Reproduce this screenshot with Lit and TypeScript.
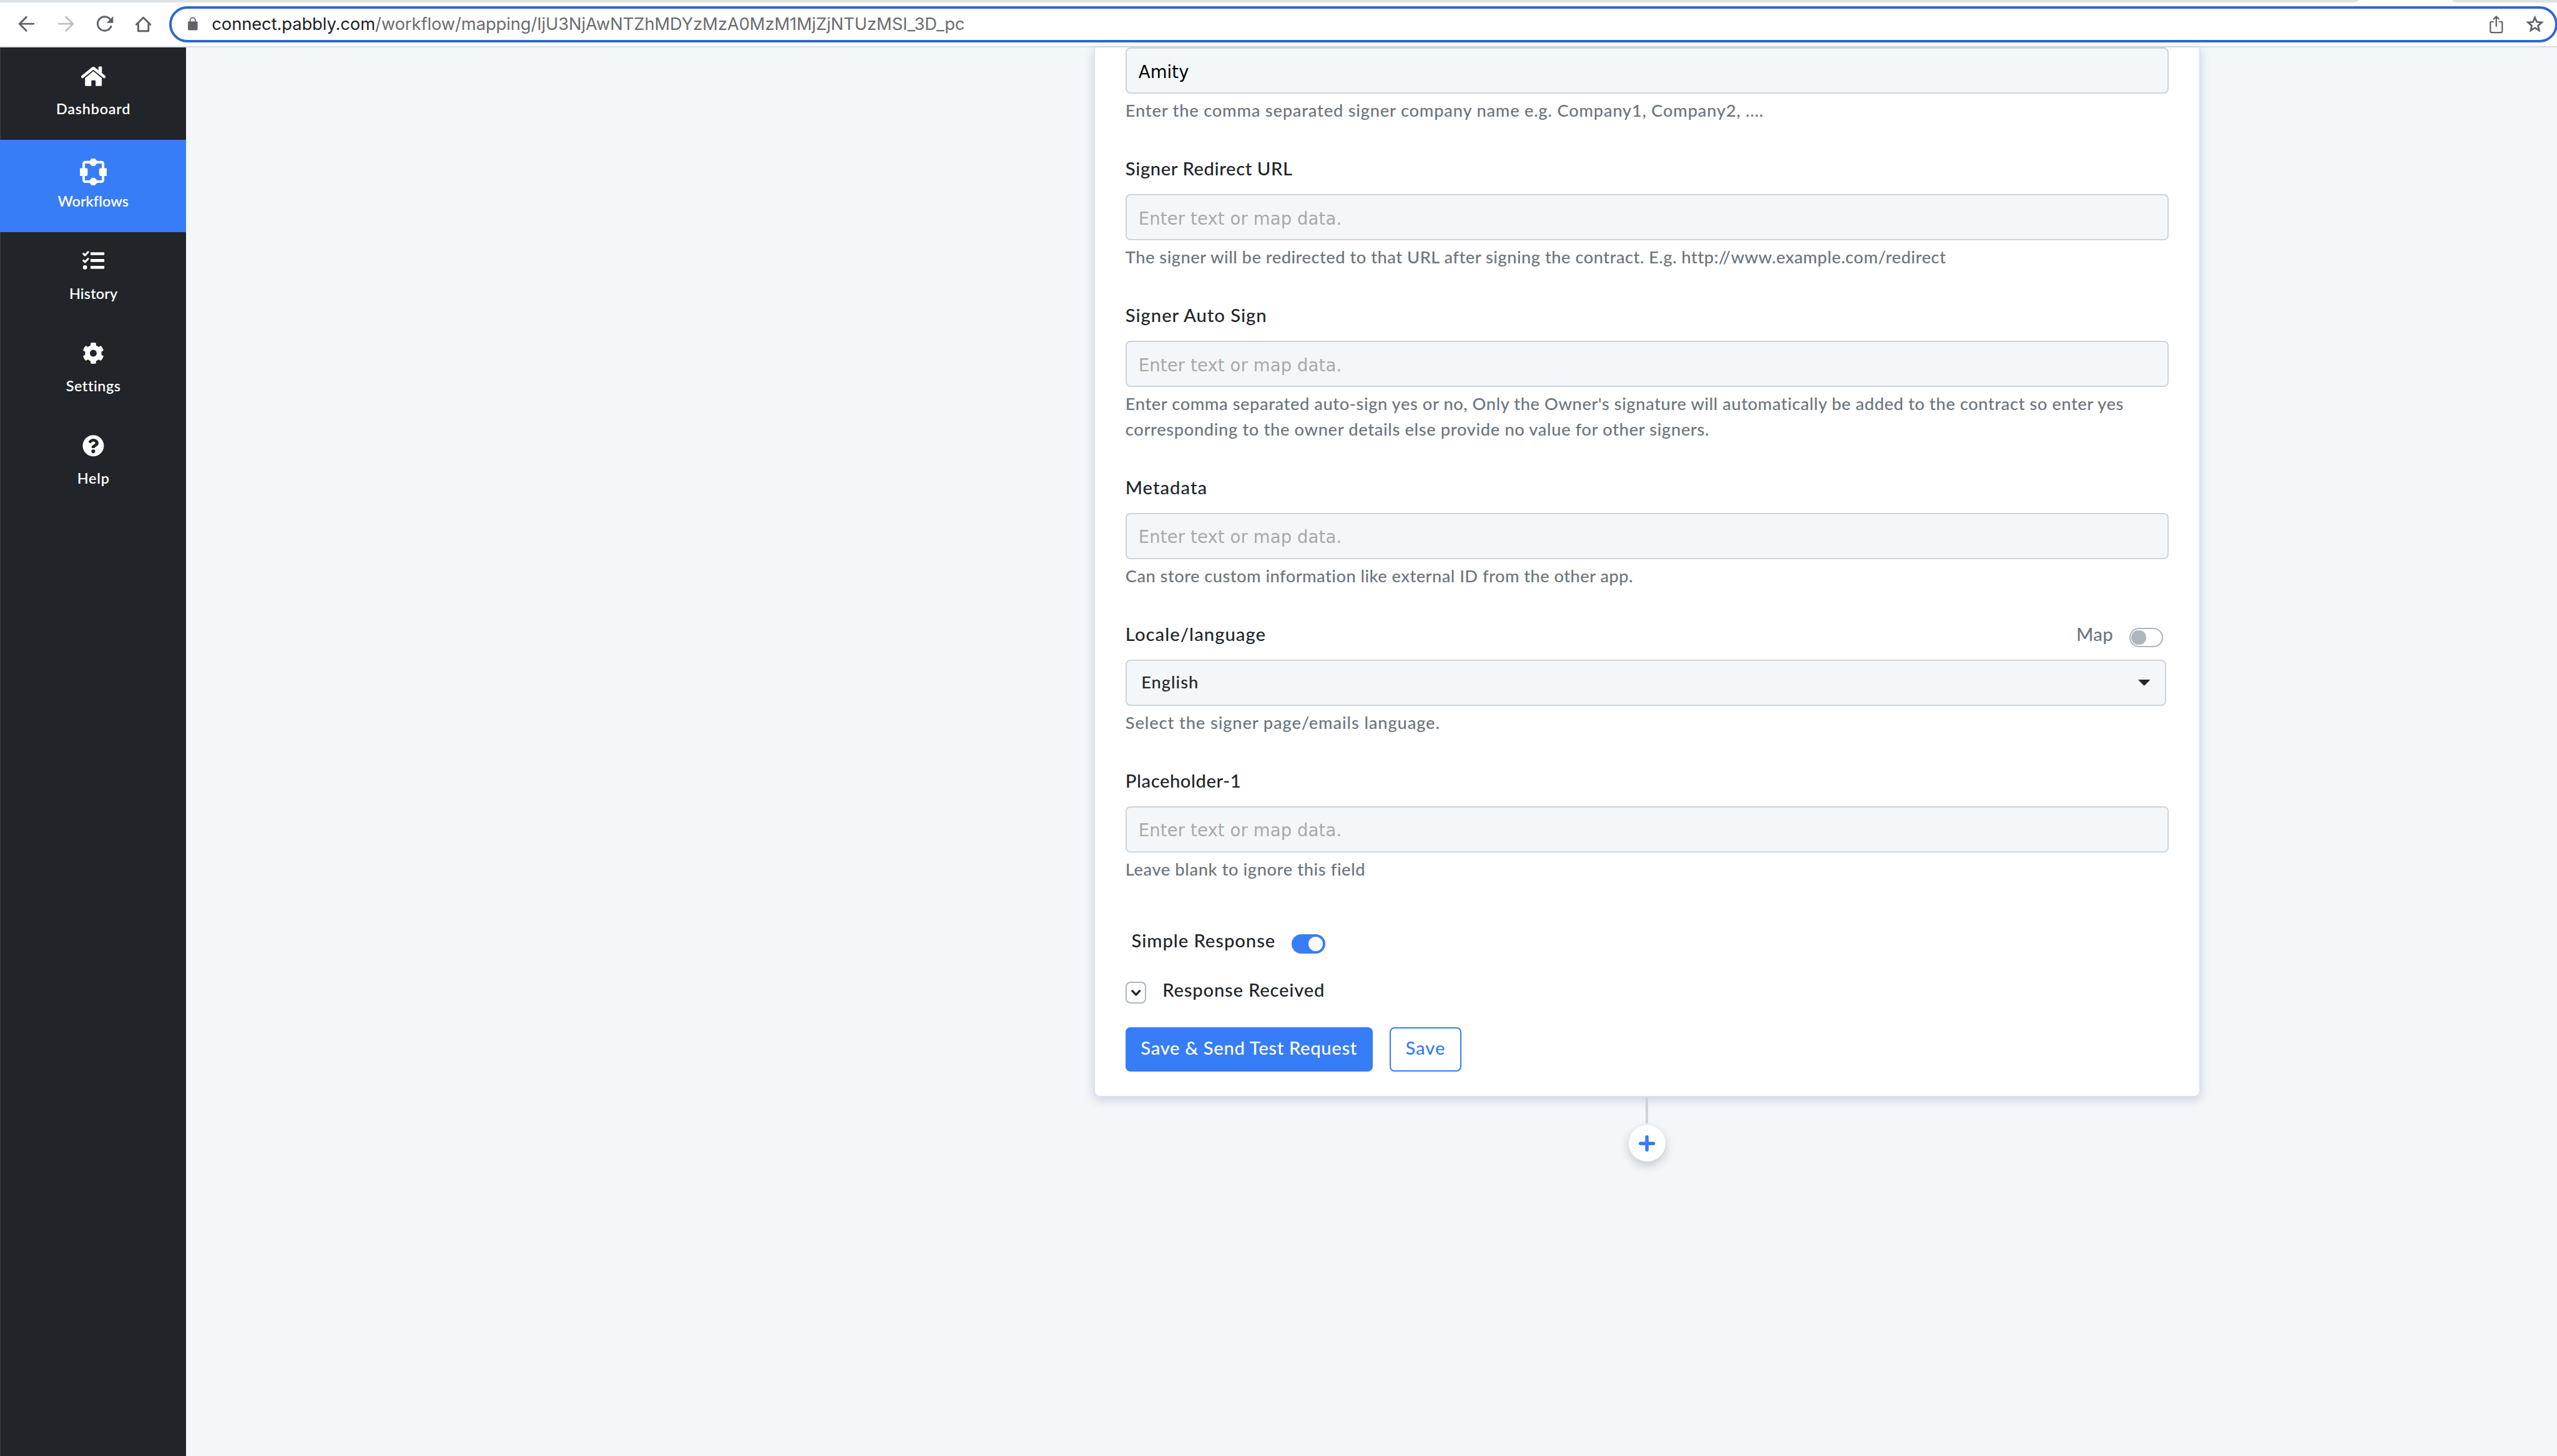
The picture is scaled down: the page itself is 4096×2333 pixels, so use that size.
import { LitElement, html, css, svg, nothing, type TemplateResult } from "lit";
import { customElement } from "lit/decorators.js";
import { classMap } from "lit/directives/class-map.js";
import { styleMap } from "lit/directives/style-map.js";

/** A run of text with its own letter spacing in px. */
interface Tracked { text: string; track: number; }

interface NavItem { label: Tracked; viewBox: string; icon: unknown; active?: boolean; }

interface Field {
  label?: Tracked;
  value?: string;
  select?: Tracked;
  help: Tracked[];
}

const t = (text: string, track = 0): Tracked => ({ text, track });
const run = (s: Tracked): TemplateResult =>
  html`<span style=${styleMap({ letterSpacing: `${s.track}px` })}>${s.text}</span>`;

const NAV: NavItem[] = [
  {
    label: t("Dashboard", 0.78),
    viewBox: "131 109 44 44",
    icon: svg`
      <path d="M135.3 126.4L151.7 113Q153 112 154.3 113L171 126.4" fill="none" stroke="#fff" stroke-width="4.6" stroke-linecap="round"/>
      <path d="M161.5 110.6Q161.5 109.4 162.7 109.4H166Q167.2 109.4 167.2 110.6V123L161.5 118.4Z"/>
      <path d="M153 117.3L167 128.8V140.4Q167 141.6 165.8 141.6H156.8V133.6Q156.8 132.4 155.6 132.4H151Q149.8 132.4 149.8 133.6V141.6H140.6Q139.4 141.6 139.4 140.4V128.8Z"/>`,
  },
  {
    label: t("Workflows", 0.05),
    viewBox: "131 261 44 44",
    active: true,
    icon: svg`
      <rect x="137.2" y="267" width="31.8" height="32" rx="2.5" fill="none" stroke="#fff" stroke-width="4.2"/>
      <path d="M131 276.8H142.5L143.7 278.5V287.5L142.5 289.6H131ZM175 276.8H163.8L162.6 278.5V287.5L163.8 289.6H175Z"/>
      <path d="M150.5 261H155.5L159.5 265V269L155 273.6H151L146.5 269V265ZM150.5 305H155.5L159.5 301V297L155 292.6H151L146.5 297V301Z"/>`,
  },
  {
    label: t("History", 0.15),
    viewBox: "131 412.7 44 44",
    icon: svg`
      <g fill="none" stroke="#fff" stroke-width="3.2" stroke-linecap="round" stroke-linejoin="round">
        <path d="M136.8 417.4L139.4 419.9L144.4 414.6M136.8 428.6L139.4 431.1L144.4 425.8"/>
      </g>
      <circle cx="139.4" cy="439.8" r="3.4"/>
      <rect x="148.4" y="414.9" width="22.8" height="4.8" rx="1"/>
      <rect x="148.4" y="426.1" width="22.8" height="4.8" rx="1"/>
      <rect x="148.4" y="437.4" width="22.8" height="4.8" rx="1"/>`,
  },
  {
    label: t("Settings", 0.55),
    viewBox: "131 564.1 44 44",
    icon: svg`<path transform="translate(135 562.5) scale(.0703)" d="M487.4 315.7l-42.6-24.6c4.3-23.2 4.3-47 0-70.2l42.6-24.6c4.9-2.8 7.1-8.6 5.5-14-11.1-35.6-30-67.8-54.7-94.6-3.8-4.1-10-5.1-14.8-2.3L380.8 110c-17.9-15.4-38.5-27.3-60.8-35.1V25.8c0-5.6-3.9-10.5-9.4-11.7-36.7-8.2-74.3-7.8-109.2 0-5.5 1.2-9.4 6.1-9.4 11.7V75c-22.2 7.9-42.8 19.8-60.8 35.1L88.7 85.5c-4.9-2.8-11-1.9-14.8 2.3-24.7 26.7-43.6 58.9-54.7 94.6-1.7 5.4.6 11.2 5.5 14L67.3 221c-4.3 23.2-4.3 47 0 70.2l-42.6 24.6c-4.9 2.8-7.1 8.6-5.5 14 11.1 35.6 30 67.8 54.7 94.6 3.8 4.1 10 5.1 14.8 2.3l42.6-24.6c17.9 15.4 38.5 27.3 60.8 35.1v49.2c0 5.6 3.9 10.5 9.4 11.7 36.7 8.2 74.3 7.8 109.2 0 5.5-1.2 9.4-6.1 9.4-11.7v-49.2c22.2-7.9 42.8-19.8 60.8-35.1l42.6 24.6c4.9 2.8 11 1.9 14.8-2.3 24.7-26.7 43.6-58.9 54.7-94.6 1.5-5.5-.7-11.3-5.6-14.1zM256 336c-44.1 0-80-35.9-80-80s35.9-80 80-80 80 35.9 80 80-35.9 80-80 80z"/>`,
  },
  {
    label: t("Help", 0.75),
    viewBox: "131 715.8 44 44",
    icon: svg`<path transform="translate(135 714.5) scale(.0703)" d="M504 256c0 136.997-111.043 248-248 248S8 392.997 8 256C8 119.083 119.043 8 256 8s248 111.083 248 248zM262.655 90c-54.497 0-89.255 22.957-116.549 63.758-3.536 5.286-2.353 12.415 2.715 16.258l34.699 26.31c5.205 3.947 12.621 3.008 16.665-2.122 17.864-22.658 30.113-35.797 57.303-35.797 20.429 0 45.698 13.148 45.698 32.958 0 14.976-12.363 22.667-32.534 33.976C247.128 238.528 216 254.941 216 296v4c0 6.627 5.373 12 12 12h56c6.627 0 12-5.373 12-12v-1.333c0-28.462 83.186-29.647 83.186-106.667 0-58.002-60.165-102-116.531-102zM256 338c-25.365 0-46 20.635-46 46 0 25.364 20.635 46 46 46s46-20.636 46-46c0-25.365-20.635-46-46-46z"/>`,
  },
];

const FIELDS: Field[] = [
  {
    value: "Amity",
    help: [t("Enter the comma separated signer company name e.g. Company1, Company2, ....", 0.8)],
  },
  {
    label: t("Signer Redirect URL", 0.6),
    help: [t("The signer will be redirected to that URL after signing the contract. E.g. http://www.example.com/redirect", 0.5)],
  },
  {
    label: t("Signer Auto Sign", 0.97),
    help: [
      t("Enter comma separated auto-sign yes or no, Only the Owner's signature will automatically be added to the contract so enter yes", 0.58),
      t("corresponding to the owner details else provide no value for other signers.", 0.65),
    ],
  },
  {
    label: t("Metadata", 1),
    help: [t("Can store custom information like external ID from the other app.", 0.46)],
  },
  {
    label: t("Locale/language", 1.05),
    select: t("English", 1),
    help: [t("Select the signer page/emails language.", 0.89)],
  },
  {
    label: t("Placeholder-1", 0.55),
    help: [t("Leave blank to ignore this field", 0.6)],
  },
];

@customElement("app-root")
export class AppRoot extends LitElement {
  static styles = css`
    :host { display: block; width: 4096px; height: 2333px; overflow: hidden; }
    * { box-sizing: border-box; }
    .stage {
      zoom: 0.975; width: 4202px; height: 2394px; overflow: hidden;
      display: flex; flex-direction: column; background: #f3f7fa;
      font-family: Lato, "Liberation Sans", sans-serif; font-weight: 500; color: #212529;
    }
    svg { display: block; overflow: visible; flex: none; }
    span { white-space: pre; }

    .browser { flex: none; height: 78px; background: #fff; border-bottom: 2.1px solid #dadcdf; }
    .tabs { display: flex; height: 4px; gap: 154px; }
    .tabs i { background: #dee1e6; height: 4px; }
    .tab-left { width: 3875px; border-bottom-right-radius: 9px 4px; }
    .tab-right { flex: 1; border-bottom-left-radius: 9px 4px; }
    .bar { display: flex; height: 72px; padding: 6px 0 0 12px; }
    .tool { width: 64px; height: 60px; display: flex; align-items: center; justify-content: center; }
    .omnibox {
      flex: none; width: 3924px; height: 60px; margin-left: 10px; padding: 0 18px 0 27px;
      border: 4.15px solid #2f68cd; border-radius: 30px; display: flex; align-items: center;
      font: 400 28px/52px Inter, "Liberation Sans", sans-serif; letter-spacing: -0.07px; color: #6a6c6e;
    }
    .host { color: #202124; }
    .url { margin-left: 23px; padding-top: 1px; flex: 1; }
    .share { margin-right: 38px; }

    .body { flex: 1; display: flex; min-height: 0; }
    .nav { flex: none; width: 306px; background: #212529; border-left: 1.1px solid #3b3f43; }
    .item {
      height: 151.7px; padding-top: 31px; display: flex; flex-direction: column; align-items: center; gap: 8.5px;
      color: #fff; font-size: 24px; font-weight: 600; line-height: 36px;
    }
    .item.active { background: #377df7; margin-left: -1px; }

    .main { flex: 1; padding-left: 1491px; }
    .flow { width: 1818px; display: flex; flex-direction: column; align-items: center; }
    .card {
      width: 1818px; height: 1725px; padding: 0 50px; background: #fff;
      border: 2.1px solid #d7e2fa; border-top: 0; border-radius: 0 0 10px 10px;
      box-shadow: 0 5px 16px rgba(33, 37, 60, 0.17);
    }
    .field { margin-bottom: 50.5px; }
    .row { display: flex; justify-content: space-between; height: 45px; margin-bottom: 20px; padding-top: 0.8px; font-size: 30px; line-height: 45px; }
    .map { display: flex; gap: 26px; margin-right: 9px; color: #6c757d; }
    .toggle {
      width: 56px; height: 32px; border-radius: 16px; border: 2.1px solid #adb5bd; background: #fff;
      display: flex; align-items: center; padding: 0 2px;
    }
    .toggle i { width: 24px; height: 24px; border-radius: 50%; background: #adb5bd; }
    .map .toggle { margin-top: 12px; }
    .toggle.on { background: #377df7; border-color: #377df7; justify-content: flex-end; }
    .toggle.on i { background: #fff; }
    .box {
      width: 1714px; height: 76px; padding: 4px 0 0 19.5px; border: 2.1px solid #ced4d9; border-radius: 8px;
      background: #f3f7fa; display: flex; align-items: center; letter-spacing: 0.12px;
      font: 400 28.2px/42px "DejaVu Sans", Verdana, sans-serif; color: #a9a9a9;
    }
    .box.filled { color: #000; }
    .box.select {
      width: 1710px; padding: 0 24px 0 24px; justify-content: space-between; color: #212529;
      font: 500 28px/42px Lato, "Liberation Sans", sans-serif;
    }
    .help { display: flex; flex-direction: column; margin-top: 7.5px; font-size: 28px; line-height: 42px; color: #6c757d; }
    .simple { display: flex; gap: 26px; height: 45px; padding: 0.8px 0 0 10px; margin-top: 72px; font-size: 30px; line-height: 45px; }
    .simple .toggle { margin-top: 12px; }
    .received { display: flex; gap: 27px; height: 45px; margin-top: 36px; padding-top: 0.8px; font-size: 30px; line-height: 45px; }
    .check { width: 34px; height: 36px; margin-top: 9px; border: 2.1px solid #adb5bd; border-radius: 8px; display: flex; align-items: center; justify-content: center; }
    .actions { display: flex; gap: 28px; margin-top: 40px; }
    .btn {
      height: 73px; padding: 9px 0 0; border: 2.1px solid #377df7; border-radius: 8px; text-align: center;
      font-size: 30px; line-height: 45px; background: #fff; color: #377df7; width: 118px;
    }
    .btn.primary { width: 406px; background: #377df7; color: #fff; }
    .wire { width: 4px; height: 43px; background: #ced3d8; }
    .add {
      width: 60px; height: 60px; margin-top: 3px; border-radius: 50%; background: #fff;
      box-shadow: 0 6px 16px rgba(0, 0, 0, 0.2); display: flex; align-items: center; justify-content: center;
    }
  `;

  private toolbar(): TemplateResult {
    return html`
      <div class="browser">
        <div class="tabs"><i class="tab-left"></i><i class="tab-right"></i></div>
        <div class="bar">
          <div class="tool">
            <svg width="28" height="28" viewBox="30 26 28 28" fill="none" stroke="#5f6368" stroke-width="3" stroke-linecap="round" stroke-linejoin="round"><path d="M55.4 39.5H32.6M43.6 28.4L32.4 39.5L43.6 50.8"/></svg>
          </div>
          <div class="tool">
            <svg width="28" height="28" viewBox="94 26 28 28" fill="none" stroke="#bdc1c6" stroke-width="3" stroke-linecap="round" stroke-linejoin="round"><path d="M96.6 39.5H119.4M108.4 28.4L119.6 39.5L108.4 50.8"/></svg>
          </div>
          <div class="tool">
            <svg width="28" height="28" viewBox="158 26 28 28"><path d="M182.6 43.8A11.5 11.5 0 1 1 181.2 32.4" fill="none" stroke="#5f6368" stroke-width="3" stroke-linecap="round"/><path d="M186 27V38H175.2Z" fill="#5f6368"/></svg>
          </div>
          <div class="tool">
            <svg width="28" height="28" viewBox="222 26 28 28" fill="none" stroke="#5f6368" stroke-width="3" stroke-linejoin="round" stroke-linecap="round"><path d="M224.5 40.6L236 29.2L247.5 40.6M227.6 38.5V51.3H244.4V38.5"/></svg>
          </div>
          <div class="omnibox">
            <svg width="16" height="22" viewBox="308 30 16 22"><rect x="308" y="36.3" width="16" height="14.8" rx="2" fill="#5f6368"/><path d="M311.8 37V34.6A4.2 4.2 0 0 1 320.2 34.6V37" fill="none" stroke="#5f6368" stroke-width="1.8"/></svg>
            <span class="url"><span class="host">connect.pabbly.com</span>/workflow/mapping/IjU3NjAwNTZhMDYzMzA0MzM1MjZjNTUzMSI_3D_pc</span>
            <svg class="share" width="22" height="29" viewBox="4089 26 22 29" fill="none" stroke="#5f6368" stroke-width="2.3" stroke-linecap="round" stroke-linejoin="round"><path d="M4095 36H4092Q4090.3 36 4090.3 37.8V51.5Q4090.3 53.8 4092.6 53.8H4107.6Q4109.8 53.8 4109.8 51.5V37.8Q4109.8 36 4108 36H4105M4100 43.5V28M4095.8 31.6L4100 27.4L4104.2 31.6"/></svg>
            <svg width="30" height="28" viewBox="4149 26 30 28"><path fill="#5f6368" fill-rule="evenodd" d="M4164 25.6L4168.1 35.2L4178.8 36.1L4170.7 43.1L4173.1 53.4L4164 47.9L4154.9 53.4L4157.3 43.1L4149.2 36.1L4159.9 35.2ZM4164 32.6L4161.8 37.8L4156.2 38.3L4160.4 42L4159.2 47.5L4164 44.5L4168.8 47.5L4167.6 42L4171.8 38.3L4166.2 37.8Z"/></svg>
          </div>
        </div>
      </div>`;
  }

  private navItem(n: NavItem): TemplateResult {
    return html`
      <div class=${classMap({ item: true, active: !!n.active })}>
        <svg width="44" height="44" viewBox=${n.viewBox} fill="#fff">${n.icon}</svg>
        ${run(n.label)}
      </div>`;
  }

  private field(f: Field): TemplateResult {
    return html`
      <div class="field">
        ${f.label
          ? html`<div class="row">
              ${run(f.label)}
              ${f.select ? html`<div class="map">${run(t("Map", 0.4))}<div class="toggle"><i></i></div></div>` : nothing}
            </div>`
          : nothing}
        ${f.select
          ? html`<div class="box select">
              ${run(f.select)}
              <svg width="20" height="10" viewBox="0 0 20 10"><path d="M0 0H20L11 9.2Q10 10 9 9.2Z" fill="#212529"/></svg>
            </div>`
          : html`<div class=${classMap({ box: true, filled: !!f.value })}><span>${f.value ?? "Enter text or map data."}</span></div>`}
        <div class="help">${f.help.map(run)}</div>
      </div>`;
  }

  render(): TemplateResult {
    return html`
      <div class="stage">
        ${this.toolbar()}
        <div class="body">
          <div class="nav">${NAV.map((n) => this.navItem(n))}</div>
          <div class="main">
            <div class="flow">
              <div class="card">
                ${FIELDS.map((f) => this.field(f))}
                <div class="simple">${run(t("Simple Response", 0.95))}<div class="toggle on"><i></i></div></div>
                <div class="received">
                  <div class="check"><svg width="18" height="12" viewBox="0 0 18 12"><path d="M2 2L9 9.2L16 2" fill="none" stroke="#212529" stroke-width="3.4" stroke-linejoin="miter"/></svg></div>
                  ${run(t("Response Received", 0.8))}
                </div>
                <div class="actions">
                  <div class="btn primary">${run(t("Save & Send Test Request", 0.67))}</div>
                  <div class="btn">${run(t("Save", 1))}</div>
                </div>
              </div>
              <div class="wire"></div>
              <div class="add"><svg width="27" height="27" viewBox="0 0 27 27" fill="none" stroke="#357bf5" stroke-width="5.6" stroke-linecap="round"><path d="M13.5 2.8V24.2M2.8 13.5H24.2"/></svg></div>
            </div>
          </div>
        </div>
      </div>`;
  }
}
